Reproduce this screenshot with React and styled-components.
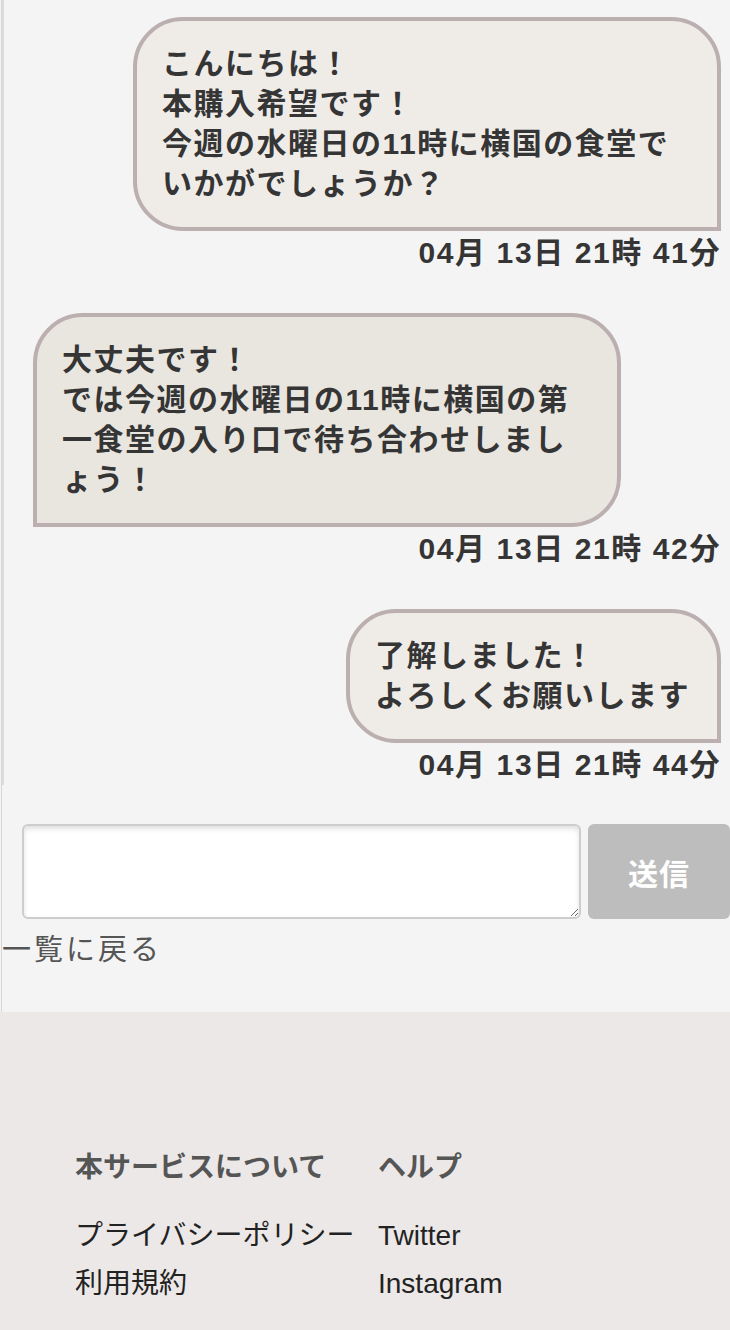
import React from "react";
import styled, { createGlobalStyle } from "styled-components";

const Global = createGlobalStyle`
  html, body {
    margin: 0;
    padding: 0;
    background: #f4f4f4;
  }
  body {
    font-family: "Liberation Sans", "Noto Sans CJK JP", sans-serif;
    color: #333;
  }
  * { box-sizing: border-box; }
`;

const Main = styled.main`
  margin-left: 1px;
  border-left: 1px solid #d6d6d6;
  padding-bottom: 42px;
`;

const ChatList = styled.section`
  display: flex;
  flex-direction: column;
  gap: 40px;
  border-left: 2px solid #dcdcdc;
  padding: 17px 9px 0 29px;
`;

const Message = styled.article`
  display: flex;
  flex-direction: column;
  align-items: ${(p) => (p.$side === "right" ? "flex-end" : "flex-start")};
`;

const Bubble = styled.div`
  width: ${(p) => (p.$wide ? "588px" : "auto")};
  max-width: 588px;
  padding: 23px 27px 23px 25px;
  border: 4px solid #bcafaf;
  background: ${(p) => (p.$side === "right" ? "#efece8" : "#e9e5df")};
  border-radius: ${(p) =>
    p.$side === "right" ? "50px 50px 0 50px" : "50px 50px 50px 0"};
  font-size: 30px;
  line-height: 40px;
  font-weight: 700;
  letter-spacing: 1.5px;
  color: #353535;
  white-space: pre-line;
`;

const Time = styled.time`
  align-self: flex-end;
  margin-top: 2px;
  font-size: 30px;
  line-height: 40px;
  font-weight: 700;
  letter-spacing: 1.6px;
  color: #353535;
`;

const Composer = styled.form`
  display: flex;
  gap: 7px;
  padding: 39px 0 0 20px;
  margin: 0;
`;

const Input = styled.textarea`
  width: 559px;
  height: 95px;
  flex: none;
  border: 2px solid #cdcdcd;
  border-radius: 6px;
  background: #fff;
  box-shadow: inset 0 3px 5px rgba(0, 0, 0, 0.12);
  font-family: inherit;
  font-size: 26px;
  padding: 8px;
  outline: none;
`;

const SendButton = styled.button`
  flex: 1;
  height: 95px;
  border: none;
  border-radius: 6px;
  background: #bdbdbd;
  color: #fff;
  font-family: inherit;
  font-size: 30px;
  font-weight: 700;
  letter-spacing: 1px;
`;

const BackLink = styled.a`
  display: block;
  margin-top: 11px;
  font-size: 29px;
  line-height: 40px;
  letter-spacing: 3px;
  color: #555;
  text-decoration: none;
`;

const Footer = styled.footer`
  background: #ebe8e7;
  padding: 136px 0 60px 75px;
`;

const Columns = styled.nav`
  display: flex;
`;

const Column = styled.div`
  display: flex;
  flex-direction: column;
  width: ${(p) => p.$width || "auto"};
`;

const FooterHeading = styled.h3`
  margin: 0 0 24px;
  font-size: 28px;
  line-height: 40px;
  font-weight: 700;
  color: #555;
`;

const FooterLink = styled.a`
  font-size: 28px;
  line-height: 48px;
  color: #222;
  text-decoration: none;
  white-space: nowrap;
`;

const messages = [
  {
    side: "right",
    wide: true,
    text: "こんにちは！\n本購入希望です！\n今週の水曜日の11時に横国の食堂で\nいかがでしょうか？",
    time: "04月 13日 21時 41分",
  },
  {
    side: "left",
    wide: true,
    text: "大丈夫です！\nでは今週の水曜日の11時に横国の第\n一食堂の入り口で待ち合わせしまし\nょう！",
    time: "04月 13日 21時 42分",
  },
  {
    side: "right",
    wide: false,
    text: "了解しました！\nよろしくお願いします",
    time: "04月 13日 21時 44分",
  },
];

const footerColumns = [
  { title: "本サービスについて", width: "303px", links: ["プライバシーポリシー", "利用規約"] },
  { title: "ヘルプ", links: ["Twitter", "Instagram"] },
];

export default function App() {
  return (
    <>
      <Global />
      <Main>
        <ChatList>
          {messages.map((m, i) => (
            <Message key={i} $side={m.side}>
              <Bubble $side={m.side} $wide={m.wide}>
                {m.text}
              </Bubble>
              <Time>{m.time}</Time>
            </Message>
          ))}
        </ChatList>
        <Composer onSubmit={(e) => e.preventDefault()}>
          <Input />
          <SendButton type="submit">送信</SendButton>
        </Composer>
        <BackLink href="#">一覧に戻る</BackLink>
      </Main>
      <Footer>
        <Columns>
          {footerColumns.map((c) => (
            <Column key={c.title} $width={c.width}>
              <FooterHeading>{c.title}</FooterHeading>
              {c.links.map((l) => (
                <FooterLink key={l} href="#">
                  {l}
                </FooterLink>
              ))}
            </Column>
          ))}
        </Columns>
      </Footer>
    </>
  );
}
